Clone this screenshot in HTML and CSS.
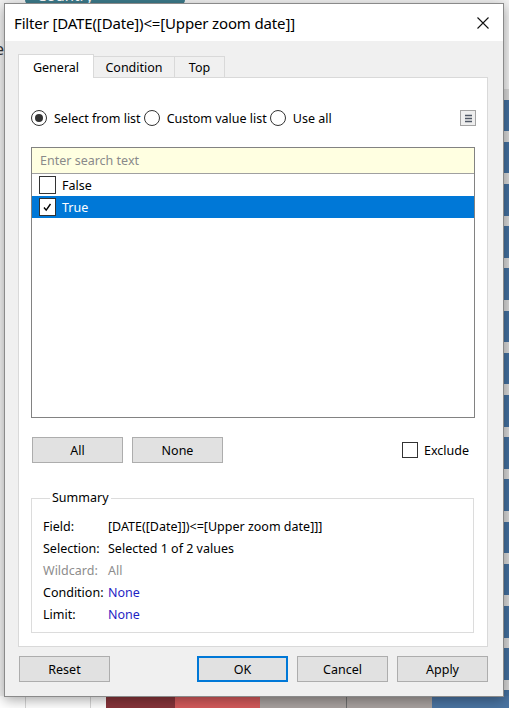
FILE: index.html
```html
<!DOCTYPE html>
<html>
<head>
<meta charset="utf-8">
<title>Filter</title>
<link rel="stylesheet" href="styles.css">
</head>
<body>
<div class="app">
  <div class="bg-pill">Country</div>
  <span class="bg-letter">e</span>
  <div class="dialog">
    <div class="titlebar">
      <span class="title">Filter [DATE([Date])&lt;=[Upper zoom date]]</span>
      <svg class="close" width="12" height="12" viewBox="0 0 12 12"><path d="M0.5 0.5L11.5 11.5M11.5 0.5L0.5 11.5" stroke="#111" stroke-width="1.1" fill="none"/></svg>
    </div>
    <div class="content">
      <div class="tabs">
        <div class="tab active">General</div>
        <div class="tab">Condition</div>
        <div class="tab">Top</div>
      </div>
      <div class="panel">
        <div class="radios">
          <span class="radio"><span class="circle on"></span>Select from list</span>
          <span class="radio"><span class="circle"></span>Custom value list</span>
          <span class="radio"><span class="circle"></span>Use all</span>
          <span class="menu-btn"><svg width="13" height="13" viewBox="0 0 13 13"><path d="M3 3.5H10M3 6.5H10M3 9.5H10" stroke="#4f5866" stroke-width="1.6" fill="none"/></svg></span>
        </div>
        <div class="listbox">
          <div class="search">Enter search text</div>
          <div class="item"><span class="cb"></span>False</div>
          <div class="item selected"><span class="cb"><svg width="15" height="15" viewBox="0 0 15 15"><path d="M4 7.5L6.2 10.2L10.5 4" stroke="#000" stroke-width="1.4" fill="none"/></svg></span>True</div>
        </div>
        <div class="btnrow">
          <button class="btn">All</button>
          <button class="btn">None</button>
          <span class="exclude"><span class="cb small"></span>Exclude</span>
        </div>
        <fieldset class="summary">
          <legend>Summary</legend>
          <div class="grid">
            <span>Field:</span><span>[DATE([Date]])&lt;=[Upper zoom date]]]</span>
            <span>Selection:</span><span>Selected 1 of 2 values</span>
            <span class="dim">Wildcard:</span><span class="dim">All</span>
            <span>Condition:</span><span class="link">None</span>
            <span>Limit:</span><span class="link">None</span>
          </div>
        </fieldset>
      </div>
      <div class="footer">
        <button class="btn">Reset</button>
        <span class="spacer"></span>
        <button class="btn default">OK</button>
        <button class="btn">Cancel</button>
        <button class="btn">Apply</button>
      </div>
    </div>
  </div>
</div>
</body>
</html>
```

FILE: styles.css
```css
* { box-sizing: border-box; }
html, body { margin: 0; padding: 0; }
body {
  width: 509px;
  height: 708px;
  overflow: hidden;
  font-family: "Noto Sans", "Open Sans", sans-serif;
  font-size: 12.5px;
  color: #000;
}
.app {
  position: relative;
  width: 509px;
  height: 708px;
  overflow: hidden;
  background:
    linear-gradient(to right, #fff 0 25px, #d6d6d6 25px 26px, #fff 26px 90px, #d6d6d6 90px 91px, #fff 91px 106px, #87343a 106px 175px, #d45a5b 175px 260px, #a9a2a0 260px 346px, #6e6e6e 346px 347px, #a9a2a0 347px 432px, #4a74a2 432px) 0 696px / 509px 12px no-repeat,
    repeating-linear-gradient(to bottom, #d8d8d8 0 10.6px, #44709f 10.6px 42.2px) 503px 89.4px / 6px 607px no-repeat,
    #f2f2f2;
}
.bg-pill {
  position: absolute;
  left: 25px;
  top: -15px;
  width: 160px;
  height: 20px;
  border-radius: 5px;
  background: #3d7b8b;
  color: #fff;
  font-size: 15px;
  padding-left: 12px;
  line-height: 20px;
}
.bg-letter {
  position: absolute;
  left: -5px;
  top: 38px;
  font-size: 16px;
  color: #333;
}
.dialog {
  position: absolute;
  left: 4px;
  top: 3px;
  width: 500px;
  height: 694px;
  border: 1px solid #8a8a8a;
  background: #f0f0f0;
  box-shadow: 0 3px 12px rgba(0,0,0,0.35);
  display: flex;
  flex-direction: column;
}
.titlebar {
  height: 37px;
  flex: none;
  background: #fff;
  display: flex;
  align-items: center;
  justify-content: space-between;
  padding: 0 14px 0 9px;
}
.title { font-size: 15px; letter-spacing: -0.15px; }
.close { display: block; }
.content {
  flex: 1;
  padding: 13px 15px 0 13px;
  display: flex;
  flex-direction: column;
}
.tabs {
  display: flex;
  align-items: flex-end;
  height: 23px;
  position: relative;
  z-index: 1;
}
.tab {
  height: 21px;
  border: 1px solid #d9d9d9;
  border-bottom: none;
  margin-left: -1px;
  display: flex;
  align-items: center;
  justify-content: center;
  background: #f0f0f0;
  padding-top: 1px;
}
.tab:nth-child(2) { width: 82px; }
.tab:nth-child(3) { width: 51px; }
.tab.active {
  margin-left: 0;
  width: 76px;
  height: 24px;
  margin-bottom: -1px;
  background: #fff;
  position: relative;
  z-index: 2;
}
.panel {
  height: 570px;
  flex: none;
  background: #fff;
  border: 1px solid #d9d9d9;
  padding: 32px 12px 0 12px;
  display: flex;
  flex-direction: column;
}
.radios {
  display: flex;
  align-items: center;
  height: 16px;
  gap: 3px;
}
.radio {
  display: flex;
  align-items: center;
  gap: 7px;
}
.circle {
  width: 16px;
  height: 16px;
  border: 1px solid #333;
  border-radius: 50%;
  display: flex;
  align-items: center;
  justify-content: center;
  background: #fff;
}
.circle.on::after {
  content: "";
  width: 8px;
  height: 8px;
  border-radius: 50%;
  background: #333;
}
.menu-btn {
  margin-left: auto;
  width: 16px;
  height: 16px;
  border: 1px solid #a3a3a3;
  background: #eeeeee;
  display: flex;
  align-items: center;
  justify-content: center;
  margin-right: -1px;
}
.menu-btn svg { display: block; }
.listbox {
  margin-top: 21px;
  height: 271px;
  border: 1px solid #828282;
  background: #fff;
}
.search {
  height: 26px;
  background: #ffffe1;
  border-bottom: 1px solid #a0a0a0;
  color: #8a8a8a;
  padding-left: 8px;
  display: flex;
  align-items: center;
}
.item {
  height: 22px;
  display: flex;
  align-items: center;
  padding-left: 7px;
  gap: 6px;
}
.item.selected { background: #0078d7; color: #fff; }
.cb {
  width: 17px;
  height: 18px;
  border: 1px solid #333;
  background: #fff;
  display: flex;
  align-items: center;
  justify-content: center;
}
.cb svg { display: block; }
.cb.small { width: 16px; height: 16px; }
.btnrow {
  margin-top: 19px;
  height: 26px;
  display: flex;
  align-items: center;
  padding-left: 1px;
  gap: 9px;
}
.btn {
  font: inherit;
  color: #000;
  width: 91px;
  height: 26px;
  background: #e1e1e1;
  border: 1px solid #adadad;
  padding: 0;
  margin: 0;
}
.btn.default { border: 2px solid #0078d7; }
.exclude {
  margin-left: auto;
  margin-right: 6px;
  display: flex;
  align-items: center;
  gap: 6px;
}
.summary {
  margin: 26px 1px 0 0;
  border: 1px solid #dcdcdc;
  padding: 8px 0 7px 11px;
  min-width: 0;
}
.summary legend {
  padding: 0 2px;
  margin-left: 7px;
  line-height: 18px;
}
.grid {
  display: grid;
  grid-template-columns: 65px 1fr;
  grid-auto-rows: 22px;
  align-items: center;
}
.dim { color: #8d8d8d; }
.link { color: #1f1fc4; }
.footer {
  margin-top: 9px;
  display: flex;
  gap: 9px;
  padding-left: 1px;
}
.spacer { flex: 1; }
```
